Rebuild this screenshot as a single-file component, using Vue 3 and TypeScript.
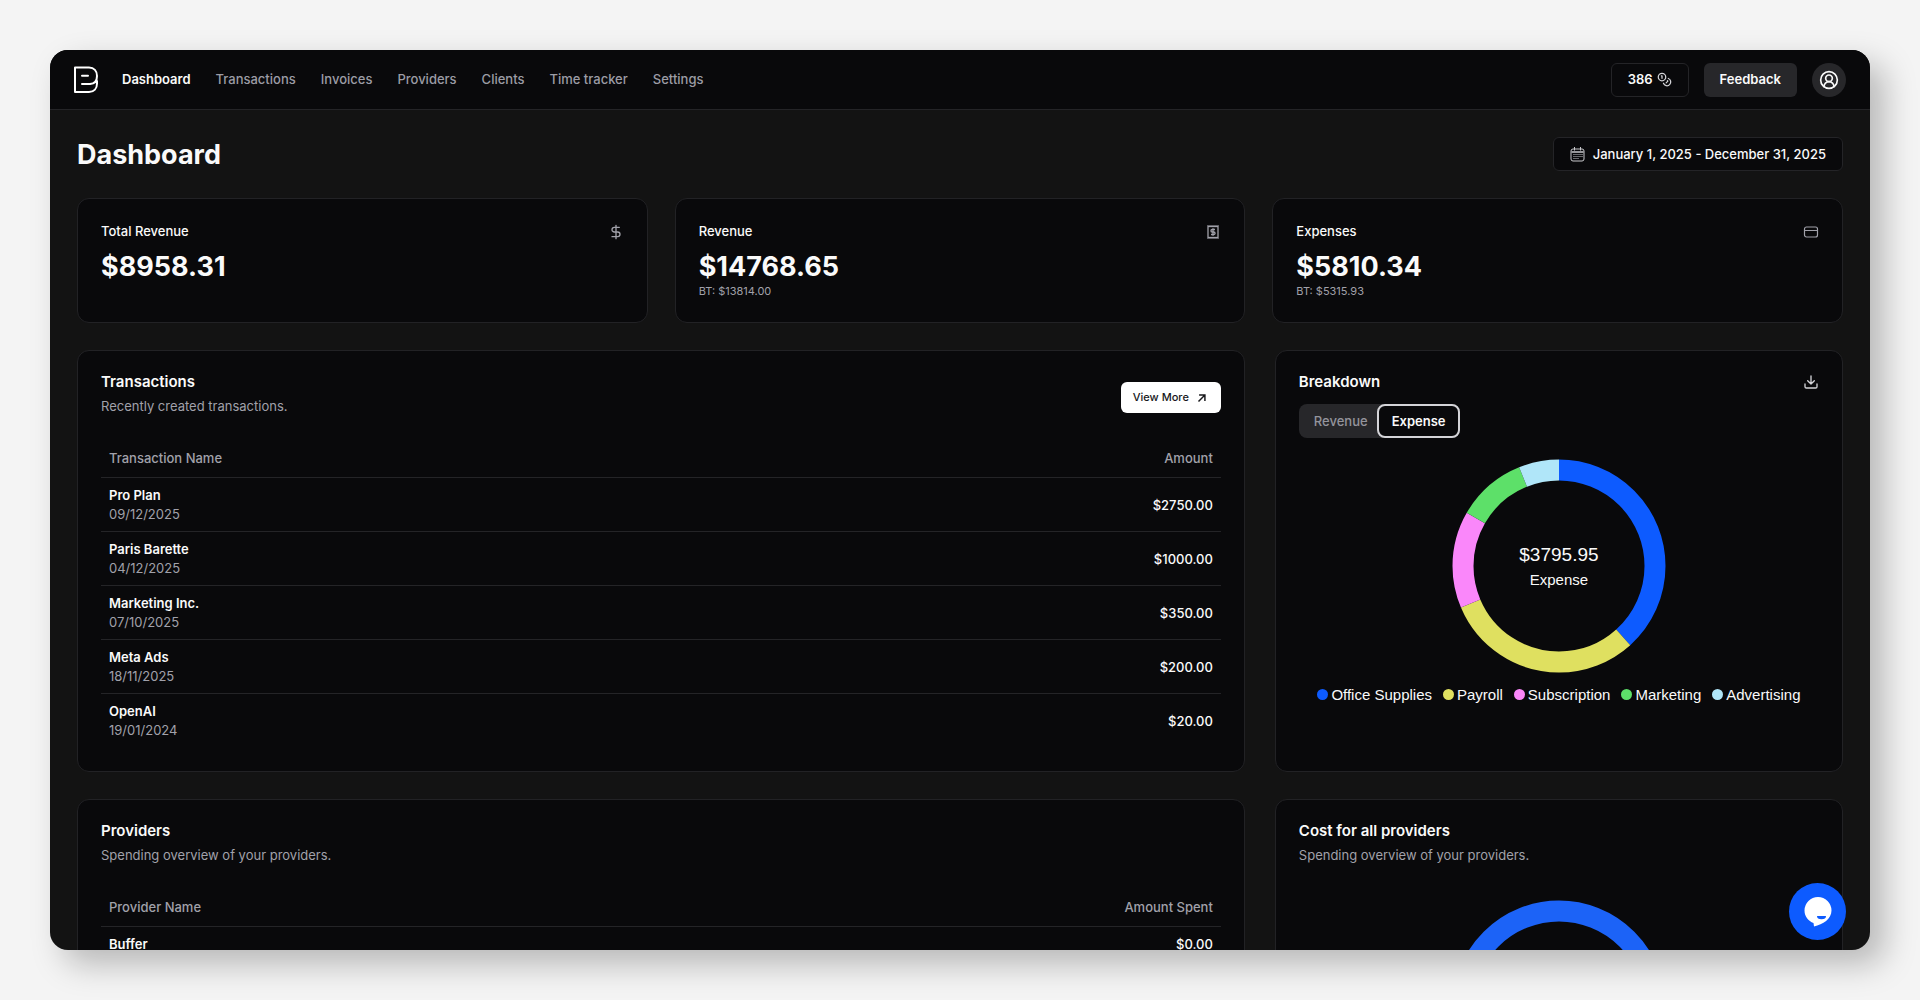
<script setup lang="ts">
import { computed, ref } from 'vue'

interface Stat {
  label: string
  value: string
  before?: string
  icon: 'dollar' | 'receipt' | 'card'
}
interface Row {
  name: string
  date?: string
  amount: string
}
interface Slice {
  label: string
  color: string
  start: number
  end: number
}

const links = ['Dashboard', 'Transactions', 'Invoices', 'Providers', 'Clients', 'Time tracker', 'Settings']

const stats: Stat[] = [
  { label: 'Total Revenue', value: '$8958.31', icon: 'dollar' },
  { label: 'Revenue', value: '$14768.65', before: 'BT: $13814.00', icon: 'receipt' },
  { label: 'Expenses', value: '$5810.34', before: 'BT: $5315.93', icon: 'card' },
]

const transactions: Row[] = [
  { name: 'Pro Plan', date: '09/12/2025', amount: '$2750.00' },
  { name: 'Paris Barette', date: '04/12/2025', amount: '$1000.00' },
  { name: 'Marketing Inc.', date: '07/10/2025', amount: '$350.00' },
  { name: 'Meta Ads', date: '18/11/2025', amount: '$200.00' },
  { name: 'OpenAI', date: '19/01/2024', amount: '$20.00' },
]

const providers: Row[] = [{ name: 'Buffer', amount: '$0.00' }]

// Slice bounds in degrees, clockwise from the top of the ring.
const slices: Slice[] = [
  { label: 'Office Supplies', color: '#0d5bff', start: 0, end: 138 },
  { label: 'Payroll', color: '#dfe060', start: 138, end: 247 },
  { label: 'Subscription', color: '#fa87fa', start: 247, end: 300 },
  { label: 'Marketing', color: '#5de069', start: 300, end: 338 },
  { label: 'Advertising', color: '#b0e6f9', start: 338, end: 360 },
]

const tabs = ['Revenue', 'Expense']
const activeTab = ref('Expense')

const arcs = computed(() =>
  slices.map((s) => ({
    color: s.color,
    dash: `${s.end - s.start} ${360 - (s.end - s.start)}`,
    offset: -s.start,
  })),
)
</script>

<template>
  <div class="page">
    <div class="window">
      <header class="topbar">
        <a href="#" class="logo" aria-label="Home">
          <svg width="26" height="28" viewBox="0 0 26 28" fill="none" stroke="#fff" stroke-width="2" stroke-linecap="round" stroke-linejoin="round">
            <path d="M24 15V17.500C24 22.500 21 26 16 26H2V1.500H16C21 1.500 24 5 24 10C24 14.800 21.500 17.800 17 18H9M9 9.800H15" />
          </svg>
        </a>
        <nav class="nav">
          <a v-for="(link, i) in links" :key="link" href="#" :class="{ active: i === 0 }">{{ link }}</a>
        </nav>
        <div class="actions">
          <button type="button" class="btn outline">
            386
            <svg class="coins" width="15" height="15" viewBox="0 0 24 24" fill="none" stroke="currentColor" stroke-width="2" stroke-linecap="round" stroke-linejoin="round">
              <circle cx="8" cy="8" r="6" />
              <path d="M18.090 10.370A6 6 0 1 1 10.340 18M7 6h1v4M16.710 13.880l.7.710-2.820 2.820" />
            </svg>
          </button>
          <button type="button" class="btn filled">Feedback</button>
          <button type="button" class="avatar" aria-label="Account">
            <svg width="20" height="20" viewBox="0 0 24 24" fill="none" stroke="currentColor" stroke-width="2" stroke-linecap="round" stroke-linejoin="round">
              <path d="M18 20a6 6 0 0 0-12 0" />
              <circle cx="12" cy="10" r="4" />
              <circle cx="12" cy="12" r="10" />
            </svg>
          </button>
        </div>
      </header>

      <main class="content">
        <div class="heading">
          <h1>Dashboard</h1>
          <button type="button" class="btn outline date">
            <svg width="15" height="15" viewBox="0 0 15 15" fill="none" stroke="#c8c8cc">
              <rect x="1" y="2" width="13" height="12" rx="2" />
              <path d="M1.500 5h12" stroke-width="1.500" />
              <path d="M4.500 0v3.500M10.500 0v3.500" />
              <path d="M3.500 7.500h9M3.500 9.500h9M3.500 11.500h6" stroke-dasharray="1 1" />
            </svg>
            January 1, 2025 - December 31, 2025
          </button>
        </div>

        <section class="stats">
          <article v-for="stat in stats" :key="stat.label" class="card stat">
            <div class="stat-head">
              <h2>{{ stat.label }}</h2>
              <svg v-if="stat.icon === 'dollar'" width="16" height="16" viewBox="0 0 24 24" fill="none" stroke="currentColor" stroke-width="2" stroke-linecap="round" stroke-linejoin="round">
                <path d="M12 2v20M17 5H9.500a3.500 3.500 0 0 0 0 7h5a3.500 3.500 0 0 1 0 7H6" />
              </svg>
              <svg v-else-if="stat.icon === 'receipt'" width="16" height="16" viewBox="0 0 16 16" fill="none" stroke="currentColor">
                <rect x="3" y="2.500" width="10" height="11" stroke-width="1.300" />
                <path d="M2.500 1.500h11M2.500 14.500h11" stroke-dasharray="1 1" />
                <path d="M10 5.500H7.200a1.250 1.250 0 0 0 0 2.500h1.600a1.250 1.250 0 0 1 0 2.500H6M8 4.200v7.600" stroke-width="1.300" />
              </svg>
              <svg v-else width="16" height="16" viewBox="0 0 16 16" fill="none" stroke="currentColor" stroke-width="1.200">
                <rect x="1.500" y="3" width="13" height="10" rx="2" />
                <path d="M1.500 6.500h13" />
              </svg>
            </div>
            <p class="value">{{ stat.value }}</p>
            <p v-if="stat.before" class="before">{{ stat.before }}</p>
          </article>
        </section>

        <section class="panels">
          <article class="card">
            <div class="card-head">
              <div>
                <h2 class="title">Transactions</h2>
                <p class="sub">Recently created transactions.</p>
              </div>
              <button type="button" class="more">
                View More
                <svg width="14" height="14" viewBox="0 0 24 24" fill="none" stroke="currentColor" stroke-width="2.500">
                  <path d="M7 7h10v10M6 18 17 7" />
                </svg>
              </button>
            </div>
            <table>
              <thead>
                <tr><th scope="col">Transaction Name</th><th scope="col" class="num">Amount</th></tr>
              </thead>
              <tbody>
                <tr v-for="row in transactions" :key="row.name">
                  <td><strong>{{ row.name }}</strong><span>{{ row.date }}</span></td>
                  <td class="num">{{ row.amount }}</td>
                </tr>
              </tbody>
            </table>
          </article>

          <article class="card">
            <div class="card-head">
              <h2 class="title">Breakdown</h2>
              <button type="button" class="icon-btn" aria-label="Download">
                <svg width="16" height="16" viewBox="0 0 24 24" fill="none" stroke="currentColor" stroke-width="2" stroke-linecap="round" stroke-linejoin="round">
                  <path d="M21 15v4a2 2 0 0 1-2 2H5a2 2 0 0 1-2-2v-4M7 10l5 5 5-5M12 15V3" />
                </svg>
              </button>
            </div>
            <div class="tabs" role="tablist">
              <button
                v-for="tab in tabs"
                :key="tab"
                type="button"
                role="tab"
                :aria-selected="tab === activeTab"
                :class="{ active: tab === activeTab }"
                @click="activeTab = tab"
              >{{ tab }}</button>
            </div>
            <div class="ring">
              <svg width="214" height="214" viewBox="0 0 214 214" fill="none" stroke-width="21">
                <circle
                  v-for="arc in arcs"
                  :key="arc.color"
                  cx="107"
                  cy="107"
                  r="96"
                  pathLength="360"
                  transform="rotate(-90 107 107)"
                  :stroke="arc.color"
                  :stroke-dasharray="arc.dash"
                  :stroke-dashoffset="arc.offset"
                />
              </svg>
              <div class="ring-label">
                <span class="ring-value">$3795.95</span>
                <span>{{ activeTab }}</span>
              </div>
            </div>
            <ul class="legend">
              <li v-for="slice in slices" :key="slice.label">
                <i :style="{ background: slice.color }"></i>{{ slice.label }}
              </li>
            </ul>
          </article>

          <article class="card">
            <div class="card-head">
              <div>
                <h2 class="title">Providers</h2>
                <p class="sub">Spending overview of your providers.</p>
              </div>
            </div>
            <table>
              <thead>
                <tr><th scope="col">Provider Name</th><th scope="col" class="num">Amount Spent</th></tr>
              </thead>
              <tbody>
                <tr v-for="row in providers" :key="row.name">
                  <td><strong>{{ row.name }}</strong></td>
                  <td class="num">{{ row.amount }}</td>
                </tr>
              </tbody>
            </table>
          </article>

          <article class="card">
            <h2 class="title">Cost for all providers</h2>
            <p class="sub">Spending overview of your providers.</p>
            <div class="ring cost">
              <svg width="214" height="214" viewBox="0 0 214 214" fill="none" stroke-width="21">
                <circle cx="107" cy="107" r="96" stroke="#1c63f7" />
              </svg>
            </div>
          </article>
        </section>
      </main>

      <button type="button" class="chat" aria-label="Open chat">
        <svg width="30" height="32" viewBox="0 0 30 32">
          <path d="M15 1A13.500 13.500 0 0 0 1.500 14.500C1.500 20.500 5.300 25 10.500 27L11 30.500C20 28.500 28.500 23 28.500 14.500A13.500 13.500 0 0 0 15 1Z" fill="#fff" />
          <path d="M14 20h9a4.500 3.200 0 0 1-9 0Z" fill="#0d5bff" />
        </svg>
      </button>
    </div>
  </div>
</template>

<style>
body {
  background: #f4f4f4;
}
</style>

<style scoped>
* {
  box-sizing: border-box;
  margin: 0;
  padding: 0;
}
.page {
  height: 100vh;
  padding: 50px;
  font-family: Inter, 'Liberation Sans', sans-serif;
  font-size: 13px;
  line-height: 19px;
  color: #fafafa;
}
.window {
  position: relative;
  height: 100%;
  overflow: hidden;
  border-radius: 18px;
  background: #131313;
  box-shadow: 14px 14px 32px rgba(0, 0, 0, 0.25);
}
button {
  font: inherit;
  color: inherit;
  border: 0;
  background: none;
  cursor: pointer;
}
a {
  color: inherit;
  text-decoration: none;
}
svg {
  display: block;
  flex: none;
}
.topbar {
  display: flex;
  align-items: center;
  height: 60px;
  padding: 0 24px 0 23px;
  background: #09090b;
  border-bottom: 1px solid #242427;
}
.logo {
  margin-right: 23px;
}
.nav {
  display: flex;
  gap: 25px;
  font-weight: 500;
  color: #9c9ca5;
}
.nav .active {
  color: #fafafa;
  font-weight: 600;
}
.actions {
  display: flex;
  gap: 15px;
  margin-left: auto;
}
.btn {
  display: flex;
  align-items: center;
  height: 34px;
  padding: 0 16px;
  border-radius: 6px;
  font-weight: 600;
}
.outline {
  gap: 4px;
  background: #09090b;
  border: 1px solid #242427;
}
.filled {
  background: #27272a;
}
.date {
  gap: 8px;
  font-weight: 500;
}
.coins {
  stroke: #d4d4d8;
}
.avatar {
  display: grid;
  place-items: center;
  width: 34px;
  height: 34px;
  border-radius: 50%;
  background: #27272a;
}
.content {
  display: grid;
  gap: 27px;
  padding: 27px;
}
.heading {
  display: flex;
  align-items: center;
  justify-content: space-between;
}
h1 {
  padding-top: 2px;
  font-size: 27px;
  line-height: 32px;
  font-weight: 700;
}
.card {
  padding: 23px;
  border: 1px solid #222225;
  border-radius: 12px;
  background: #09090b;
}
.stats {
  display: grid;
  grid-template-columns: repeat(3, 1fr);
  gap: 27px;
}
.stat {
  min-height: 124px;
}
.stat-head {
  display: flex;
  align-items: center;
  justify-content: space-between;
  color: #a1a1aa;
}
.stat-head h2 {
  font-size: 13px;
  font-weight: 500;
  color: #fafafa;
}
.value {
  margin-top: 10px;
  font-size: 27px;
  line-height: 32px;
  font-weight: 700;
}
.before {
  font-size: 11px;
  line-height: 16px;
  color: #a1a1aa;
}
.panels {
  display: grid;
  grid-template-columns: 37fr 18fr;
  gap: 27px 30px;
}
.card-head {
  display: flex;
  align-items: flex-start;
  justify-content: space-between;
}
.title {
  font-size: 15px;
  line-height: 16px;
  font-weight: 600;
}
.sub {
  margin-top: 7px;
  color: #a1a1aa;
}
.more {
  display: flex;
  align-items: center;
  gap: 6px;
  height: 31px;
  margin-top: 8px;
  padding: 0 12px;
  border-radius: 6px;
  background: #fff;
  color: #18181b;
  font-size: 11px;
  font-weight: 500;
}
table {
  width: 100%;
  margin-top: 24px;
  border-spacing: 0;
}
th {
  height: 38px;
  padding: 0 8px;
  text-align: left;
  font-weight: 500;
  color: #a1a1aa;
  border-bottom: 1px solid #242427;
}
td {
  padding: 8px 8px 7px;
  border-bottom: 1px solid #242427;
}
tbody tr:last-child td {
  border-bottom-color: transparent;
}
td strong,
td span {
  display: block;
}
td strong {
  font-weight: 600;
}
td span {
  color: #a1a1aa;
}
.num {
  text-align: right;
  font-weight: 500;
}
.icon-btn {
  color: #d4d4d8;
}
.tabs {
  display: inline-flex;
  margin-top: 14px;
  border-radius: 8px;
  background: #27272a;
  color: #94949c;
  font-weight: 500;
}
.tabs button {
  height: 34px;
  padding: 0 9px 0 15px;
}
.tabs .active {
  padding: 0 13px;
  border: 2px solid #d4d4d8;
  border-radius: 8px;
  background: #09090b;
  color: #fafafa;
  font-weight: 600;
}
.ring {
  position: relative;
  display: flex;
  justify-content: center;
  margin-top: 21px;
}
.cost {
  margin-top: 35px;
}
.ring-label {
  position: absolute;
  inset: 0;
  display: flex;
  flex-direction: column;
  align-items: center;
  justify-content: center;
  gap: 6px;
  padding-top: 2px;
  font-family: 'Liberation Sans', Arial, sans-serif;
  font-size: 15px;
}
.ring-value {
  font-size: 19px;
}
.legend {
  display: flex;
  justify-content: center;
  gap: 11px;
  margin-top: 12px;
  list-style: none;
  font-family: 'Liberation Sans', Arial, sans-serif;
  font-size: 15px;
  white-space: nowrap;
}
.legend li {
  display: flex;
  align-items: center;
  gap: 3px;
}
.legend i {
  width: 11px;
  height: 11px;
  border-radius: 50%;
}
.chat {
  position: absolute;
  right: 24px;
  bottom: 10px;
  display: grid;
  place-items: center;
  width: 57px;
  height: 57px;
  border-radius: 50%;
  background: #0d5bff;
}
</style>
